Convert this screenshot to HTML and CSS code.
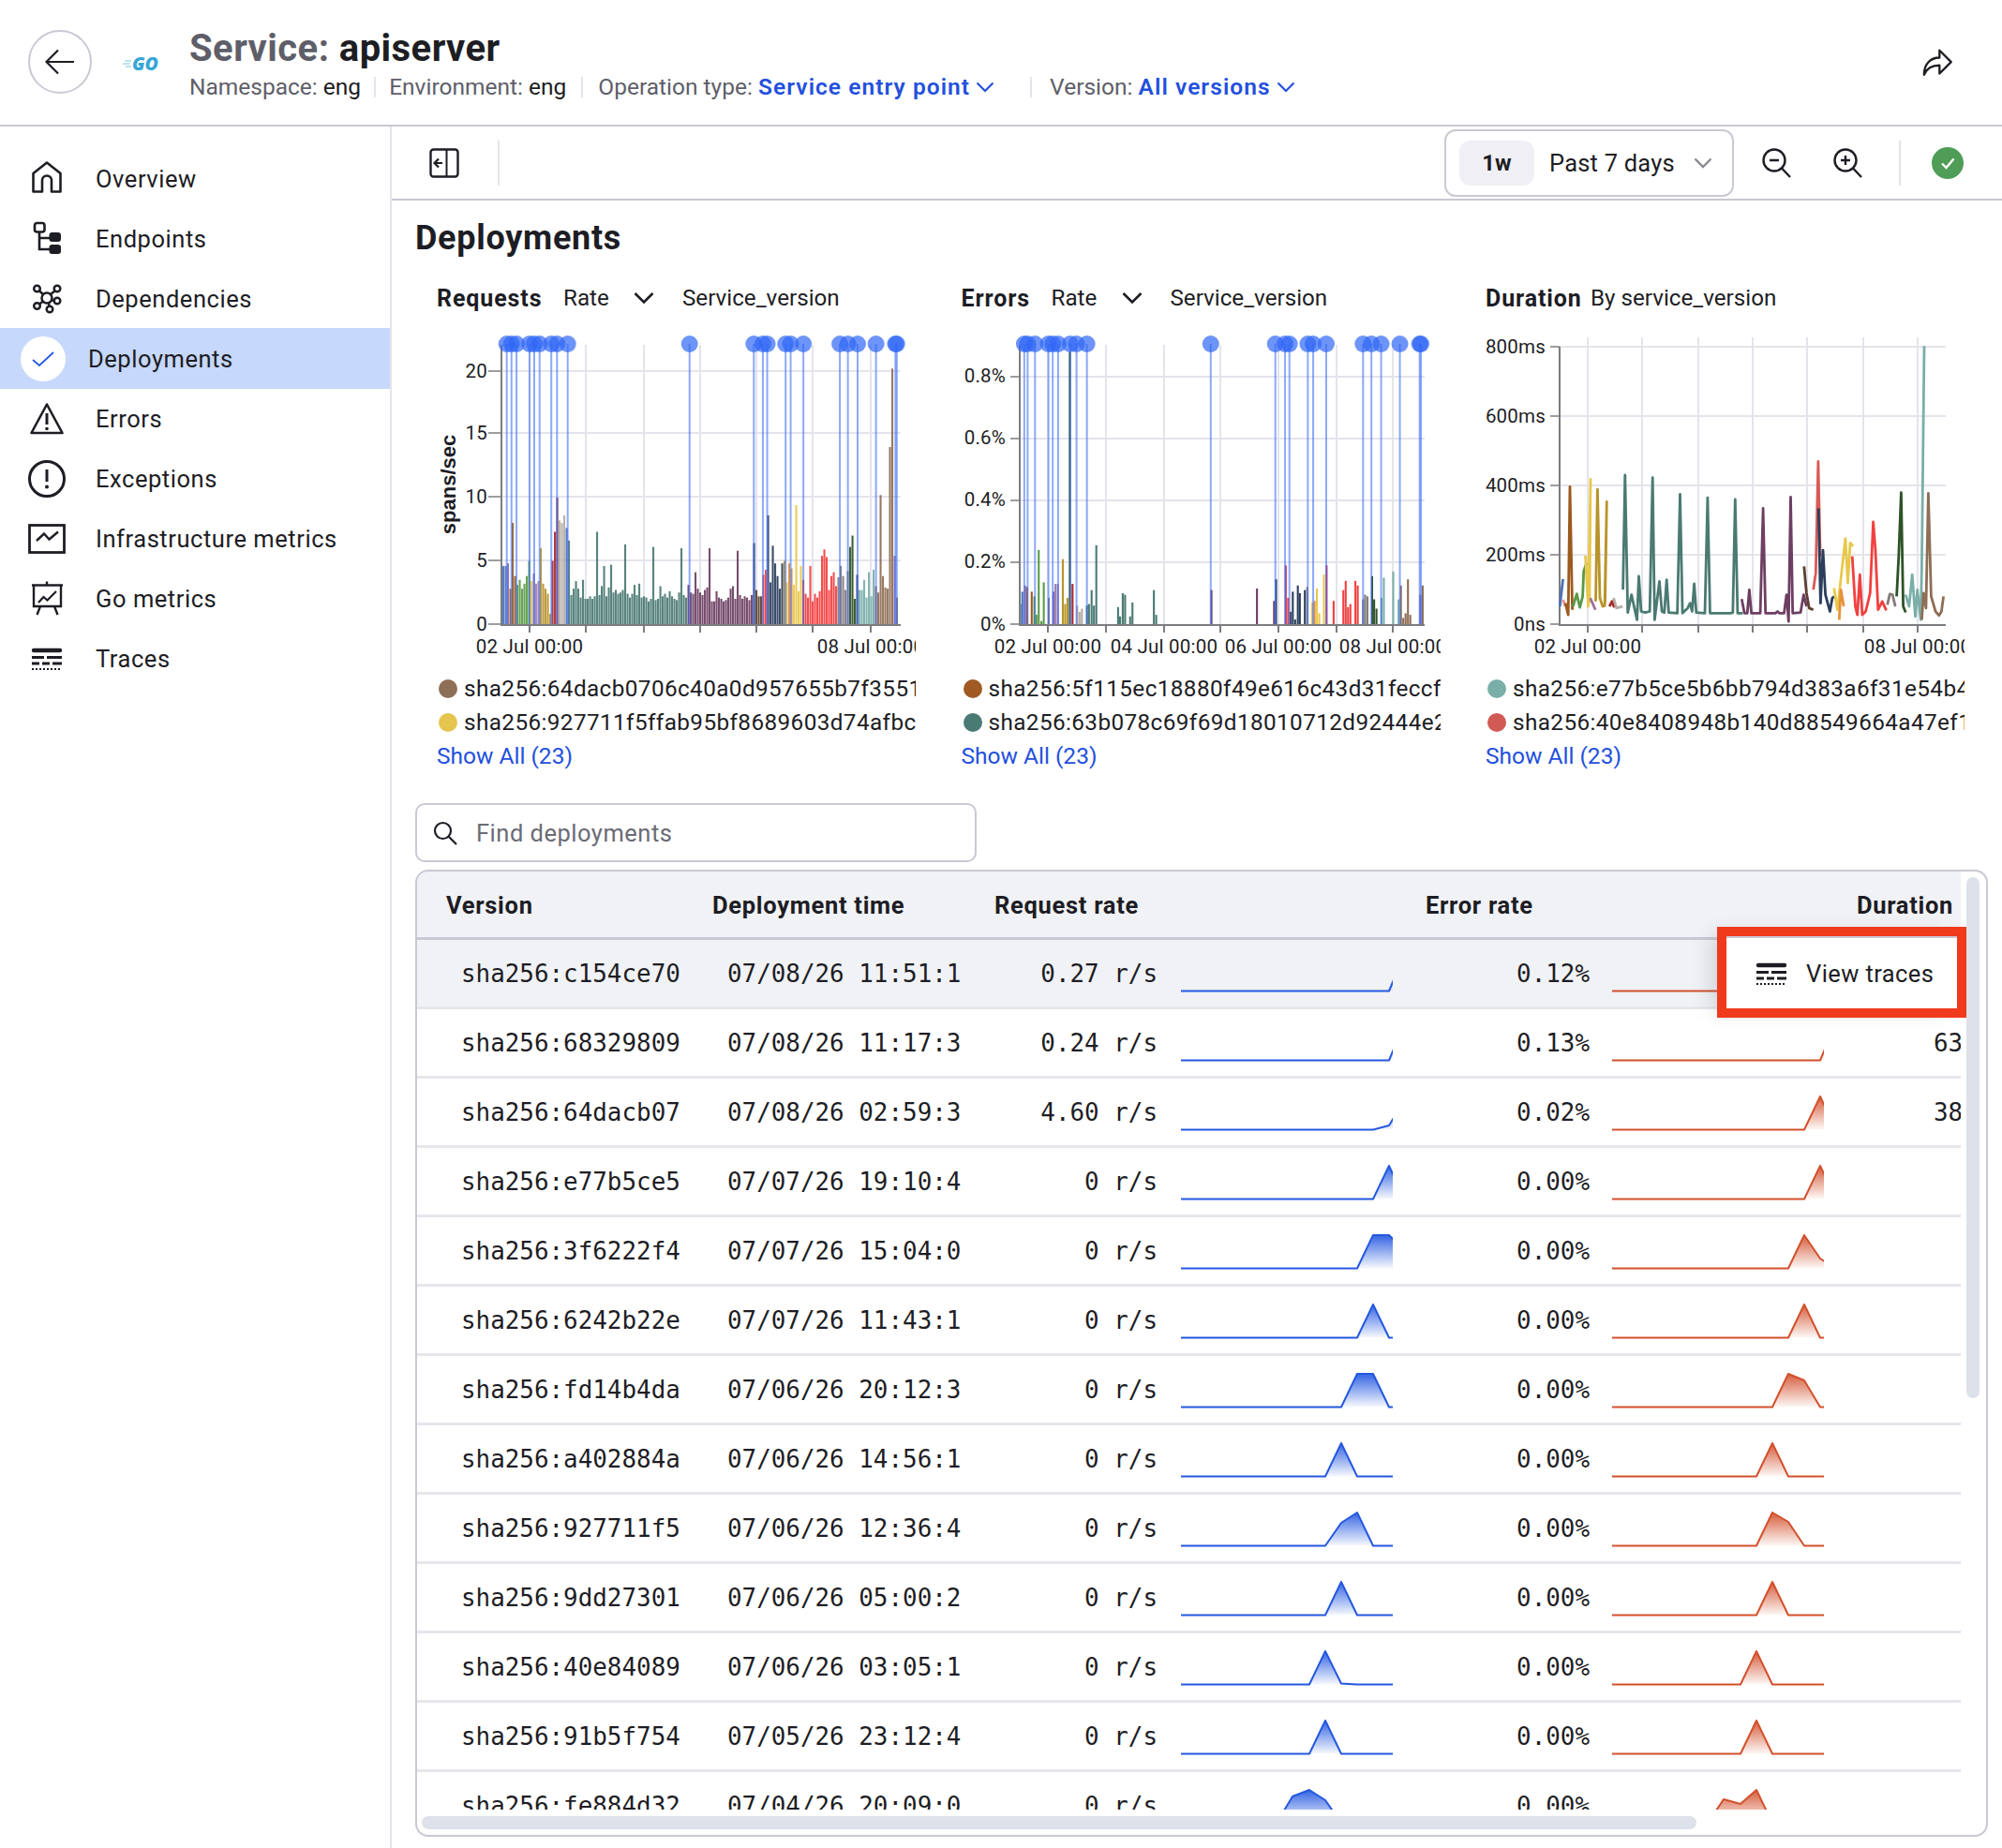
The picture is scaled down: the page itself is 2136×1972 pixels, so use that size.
FILE: index.html
```html
<!DOCTYPE html>
<html lang="en">
<head>
<meta charset="utf-8">
<title>Service: apiserver</title>
<link rel="stylesheet" href="styles.css">
</head>
<body>
<svg class="defs" aria-hidden="true">
  <defs>
    <linearGradient id="gb" gradientUnits="userSpaceOnUse" x1="0" y1="0" x2="0" y2="40"><stop offset="0" stop-color="#2458e0"/><stop offset="1" stop-color="#2458e0" stop-opacity="0"/></linearGradient>
    <linearGradient id="gr" gradientUnits="userSpaceOnUse" x1="0" y1="0" x2="0" y2="40"><stop offset="0" stop-color="#d2502c"/><stop offset="1" stop-color="#d2502c" stop-opacity="0"/></linearGradient>
    <symbol id="traces" viewBox="0 0 40 40">
      <path d="M6 11H34" stroke="currentColor" stroke-width="4.4" stroke-linecap="round" fill="none"/>
      <path d="M4 18.5H17M20 18.5H36M4 25H12M15 25H23M26 25H36" stroke="currentColor" stroke-width="3" fill="none"/>
      <path d="M4 31H36" stroke="currentColor" stroke-width="2" stroke-dasharray="2 2" fill="none"/>
    </symbol>
  </defs>
</svg>

<header class="top">
  <button class="back" type="button" aria-label="Back">
    <svg viewBox="0 0 32 28" width="32" height="28"><path d="M31 14H2M14 1.5 1.5 14 14 26.5" fill="none" stroke="#1d1d24" stroke-width="2.2"/></svg>
  </button>
  <svg class="go" viewBox="0 0 40 16" width="40" height="16" aria-label="Go">
    <path d="M3 5H10M1 8H9M4 11H10" stroke="#7cc4e4" stroke-width="1"/>
    <text x="11" y="14.5" class="gotext" textLength="28" lengthAdjust="spacingAndGlyphs">GO</text>
  </svg>
  <div class="titles">
    <h1 class="title"><span class="title-key">Service:</span> apiserver</h1>
    <div class="meta">
      <span class="meta-item">Namespace: <b>eng</b></span>
      <span class="meta-item">Environment: <b>eng</b></span>
      <span class="meta-item">Operation type: <a class="pick">Service entry point<svg class="chev" viewBox="0 0 20 12" width="20" height="12"><path d="M1.5 1.5 10 10l8.500-8.500" fill="none" stroke="currentColor" stroke-width="2.200"/></svg></a></span>
      <span class="meta-item">Version: <a class="pick">All versions<svg class="chev" viewBox="0 0 20 12" width="20" height="12"><path d="M1.500 1.500 10 10l8.500-8.500" fill="none" stroke="currentColor" stroke-width="2.200"/></svg></a></span>
    </div>
  </div>
  <svg class="share" viewBox="0 0 36 32" width="33" height="30" aria-label="Share"><path d="M2 30C2 18 9 10 20 10V1.500L33.500 15 20 28.500V19C12 19 5 22 2 30Z" fill="none" stroke="#1d1d24" stroke-width="2.500" stroke-linejoin="round"/></svg>
</header>

<div class="shell">
  <nav class="side">
    <a class="nav"><svg class="ico" viewBox="0 0 40 40"><path d="M5.500 14 20 2.500 34.500 14V33.500H25V21.500a5 5 0 0 0-10 0V33.500H5.500Z" fill="none" stroke="currentColor" stroke-width="2.600" stroke-linejoin="round"/></svg><span>Overview</span></a>
    <a class="nav"><svg class="ico" viewBox="0 0 40 40"><rect x="7" y="3" width="10.500" height="9.500" rx="2.500" fill="none" stroke="currentColor" stroke-width="2.600"/><path d="M12 12.500V31H23M12 19H23" fill="none" stroke="currentColor" stroke-width="2.600"/><rect x="22.500" y="13" width="12.500" height="10" rx="3" fill="currentColor"/><rect x="22.500" y="26" width="12.500" height="10" rx="3" fill="currentColor"/></svg><span>Endpoints</span></a>
    <a class="nav"><svg class="ico" viewBox="0 0 40 40"><g fill="none" stroke="currentColor" stroke-width="2.500"><circle cx="20" cy="19" r="5.500"/><circle cx="9.500" cy="9" r="3.300"/><circle cx="31" cy="9" r="3.300"/><circle cx="9.500" cy="27.500" r="3.300"/><circle cx="31" cy="22" r="3.300"/><circle cx="23" cy="31" r="3.300"/><path d="M12 11.500 16 15M28.500 11.500 24 15M12 25.500 16 22.500M28 21.500H25.500M22 24.500 22.500 28"/></g></svg><span>Dependencies</span></a>
    <a class="nav nav-on"><span class="pill"><svg viewBox="0 0 24 16" width="24" height="16"><path d="M1 9 8 15 23 1" fill="none" stroke="#2458e0" stroke-width="1.800"/></svg></span><span>Deployments</span></a>
    <a class="nav"><svg class="ico" viewBox="0 0 40 40"><path d="M20 4.500 36.500 35H3.500Z" fill="none" stroke="currentColor" stroke-width="2.600" stroke-linejoin="round"/><path d="M20 14V26" stroke="currentColor" stroke-width="3"/><circle cx="20" cy="30.500" r="1.800" fill="currentColor"/></svg><span>Errors</span></a>
    <a class="nav"><svg class="ico" viewBox="0 0 40 40"><circle cx="20" cy="20" r="18.500" fill="none" stroke="currentColor" stroke-width="3"/><path d="M20 10V23" stroke="currentColor" stroke-width="3"/><circle cx="20" cy="28.500" r="2" fill="currentColor"/></svg><span>Exceptions</span></a>
    <a class="nav"><svg class="ico" viewBox="0 0 40 40"><rect x="1.500" y="5.500" width="37" height="29" fill="none" stroke="currentColor" stroke-width="2.800"/><path d="M9 22 17 14.500 22.500 20.500 32 12.500" fill="none" stroke="currentColor" stroke-width="2.400"/></svg><span>Infrastructure metrics</span></a>
    <a class="nav"><svg class="ico" viewBox="0 0 40 40"><path d="M4 5.500H37M20 1.500V5.500M6 5.500V28H35V5.500M13 28 9.500 37M28 28 31.500 37" fill="none" stroke="currentColor" stroke-width="2.400"/><path d="M11 24 16.500 18 20.500 21.500 30 12" fill="none" stroke="currentColor" stroke-width="2.200"/></svg><span>Go metrics</span></a>
    <a class="nav"><svg class="ico"><use href="#traces"/></svg><span>Traces</span></a>
  </nav>

  <main class="main">
    <div class="bar">
      <svg class="collapse" viewBox="0 0 32 32" width="32" height="32"><rect x="1.500" y="1.500" width="29" height="29" rx="3" fill="none" stroke="#1d1d24" stroke-width="2.400"/><path d="M18.500 1.500V30.500" stroke="#1d1d24" stroke-width="2"/><path d="M14 16H6M10 11.500 5.500 16 10 20.500" fill="none" stroke="#1d1d24" stroke-width="2.200"/></svg>
      <span class="vsep vsep-a"></span>
      <div class="range">
        <span class="chip">1w</span>
        <span class="range-label">Past 7 days</span>
        <svg class="range-chev" viewBox="0 0 20 12" width="20" height="12"><path d="M1.500 1.500 10 10l8.500-8.500" fill="none" stroke="#8a8a90" stroke-width="2.400"/></svg>
      </div>
      <svg class="tool tool-a" viewBox="0 0 32 32" width="32" height="32"><circle cx="13" cy="13" r="11.500" fill="none" stroke="#1d1d24" stroke-width="2.400"/><path d="M21 21.500 30 31M8 13H18" fill="none" stroke="#1d1d24" stroke-width="2.400"/></svg>
      <svg class="tool tool-b" viewBox="0 0 32 32" width="32" height="32"><circle cx="13" cy="13" r="11.500" fill="none" stroke="#1d1d24" stroke-width="2.400"/><path d="M21 21.500 30 31M8 13H18M13 8V18" fill="none" stroke="#1d1d24" stroke-width="2.400"/></svg>
      <span class="vsep vsep-b"></span>
      <svg class="ok" viewBox="0 0 34 34" width="34" height="34"><circle cx="17" cy="17" r="17" fill="#4f9d57"/><path d="M11 17.500 15.500 22 23.500 12.500" fill="none" stroke="#fff" stroke-width="2.400"/></svg>
    </div>

    <section class="page">
      <h2 class="heading">Deployments</h2>
      <div class="charts">
        <article class="panel">
          <div class="panel-head"><b class="pt pt-a">Requests</b><span class="pm">Rate</span><svg class="pchev" viewBox="0 0 22 14" width="22" height="14"><path d="M1.500 2 11 11.500 20.500 2" fill="none" stroke="#1d1d24" stroke-width="2.600"/></svg><span>Service_version</span></div>
          <svg class="plot" id="req" viewBox="466 345 511 360">
            <g class="tx ty"><text x="520" y="403">20</text><text x="520" y="469">15</text><text x="520" y="537">10</text><text x="520" y="605">5</text><text x="520" y="673">0</text></g>
            <g class="tx tm"><text x="565" y="697">02 Jul 00:00</text><text x="929" y="697">08 Jul 00:00</text></g>
            <text class="unit" transform="translate(486 517) rotate(-90)">spans/sec</text>
          </svg>
          <div class="legend"><i class="dot d1"></i>sha256:64dacb0706c40a0d957655b7f3551a</div>
          <div class="legend"><i class="dot d2"></i>sha256:927711f5ffab95bf8689603d74afbc2</div>
          <a class="more">Show All (23)</a>
        </article>
        <article class="panel">
          <div class="panel-head"><b class="pt pt-b">Errors</b><span class="pm">Rate</span><svg class="pchev" viewBox="0 0 22 14" width="22" height="14"><path d="M1.500 2 11 11.500 20.500 2" fill="none" stroke="#1d1d24" stroke-width="2.600"/></svg><span>Service_version</span></div>
          <svg class="plot" id="err" viewBox="1026 345 511 360">
            <g class="tx ty"><text x="1073" y="408">0.8%</text><text x="1073" y="474">0.6%</text><text x="1073" y="540">0.4%</text><text x="1073" y="606">0.2%</text><text x="1073" y="673">0%</text></g>
            <g class="tx tm"><text x="1118" y="697">02 Jul 00:00</text><text x="1242" y="697">04 Jul 00:00</text><text x="1364" y="697">06 Jul 00:00</text><text x="1486" y="697">08 Jul 00:00</text></g>
          </svg>
          <div class="legend"><i class="dot d3"></i>sha256:5f115ec18880f49e616c43d31feccf2</div>
          <div class="legend"><i class="dot d4"></i>sha256:63b078c69f69d18010712d92444e21</div>
          <a class="more">Show All (23)</a>
        </article>
        <article class="panel">
          <div class="panel-head"><b class="pt pt-c">Duration</b><span>By service_version</span></div>
          <svg class="plot" id="dur" viewBox="1585 345 511 360">
            <g class="tx ty"><text x="1649" y="377">800ms</text><text x="1649" y="451">600ms</text><text x="1649" y="525">400ms</text><text x="1649" y="599">200ms</text><text x="1649" y="673">0ns</text></g>
            <g class="tx tm"><text x="1694" y="697">02 Jul 00:00</text><text x="2046" y="697">08 Jul 00:00</text></g>
          </svg>
          <div class="legend"><i class="dot d5"></i>sha256:e77b5ce5b6bb794d383a6f31e54b49</div>
          <div class="legend"><i class="dot d6"></i>sha256:40e8408948b140d88549664a47ef1</div>
          <a class="more">Show All (23)</a>
        </article>
      </div>

      <label class="find">
        <svg viewBox="0 0 26 26" width="26" height="26"><circle cx="10.500" cy="10.500" r="8.500" fill="none" stroke="#1d1d24" stroke-width="2.200"/><path d="M16.500 16.500 25 25" stroke="#1d1d24" stroke-width="2.200"/></svg>
        <span>Find deployments</span>
      </label>

      <div class="tablebox">
        <div class="scroller">
          <div class="row head">
            <div class="c1">Version</div><div class="c2">Deployment time</div><div class="c3">Request rate</div><div></div><div class="c5">Error rate</div><div></div><div class="c7">Duration</div>
          </div>
          <div class="row hot"><div class="c1">sha256:c154ce70</div><div class="c2">07/08/26 11:51:1</div><div class="c3">0.27 r/s</div><svg class="spark"><path class="b" fill="url(#gb)" d="M0 38.500H222L228 24V38.500"/></svg><div class="c5">0.12%</div><svg class="spark"><path class="r" fill="url(#gr)" d="M0 38.500H222L228 24V38.500"/></svg><div class="c7"></div></div>
          <div class="row"><div class="c1">sha256:68329809</div><div class="c2">07/08/26 11:17:3</div><div class="c3">0.24 r/s</div><svg class="spark"><path class="b" fill="url(#gb)" d="M0 38.500H222L228 24V38.500"/></svg><div class="c5">0.13%</div><svg class="spark"><path class="r" fill="url(#gr)" d="M0 38.500H222L228 24V38.500"/></svg><div class="c7">63</div></div>
          <div class="row"><div class="c1">sha256:64dacb07</div><div class="c2">07/08/26 02:59:3</div><div class="c3">4.60 r/s</div><svg class="spark"><path class="b" fill="url(#gb)" d="M0 38.500H205L222 34L228 24V38.500"/></svg><div class="c5">0.02%</div><svg class="spark"><path class="r" fill="url(#gr)" d="M0 38.500H205L222 3L228 16V38.500"/></svg><div class="c7">38</div></div>
          <div class="row"><div class="c1">sha256:e77b5ce5</div><div class="c2">07/07/26 19:10:4</div><div class="c3">0 r/s</div><svg class="spark"><path class="b" fill="url(#gb)" d="M0 38.500H205L222 3L228 16V38.500"/></svg><div class="c5">0.00%</div><svg class="spark"><path class="r" fill="url(#gr)" d="M0 38.500H205L222 3L228 16V38.500"/></svg><div class="c7"></div></div>
          <div class="row"><div class="c1">sha256:3f6222f4</div><div class="c2">07/07/26 15:04:0</div><div class="c3">0 r/s</div><svg class="spark"><path class="b" fill="url(#gb)" d="M0 38.500H188L205 3H222L228 9V38.500"/></svg><div class="c5">0.00%</div><svg class="spark"><path class="r" fill="url(#gr)" d="M0 38.500H188L205 3L222 28L228 32V38.500"/></svg><div class="c7"></div></div>
          <div class="row"><div class="c1">sha256:6242b22e</div><div class="c2">07/07/26 11:43:1</div><div class="c3">0 r/s</div><svg class="spark"><path class="b" fill="url(#gb)" d="M0 38.500H188L205 3L222 38.500H226"/></svg><div class="c5">0.00%</div><svg class="spark"><path class="r" fill="url(#gr)" d="M0 38.500H188L205 3L222 38.500H226"/></svg><div class="c7"></div></div>
          <div class="row"><div class="c1">sha256:fd14b4da</div><div class="c2">07/06/26 20:12:3</div><div class="c3">0 r/s</div><svg class="spark"><path class="b" fill="url(#gb)" d="M0 38.500H171L188 3H205L222 38.500H226"/></svg><div class="c5">0.00%</div><svg class="spark"><path class="r" fill="url(#gr)" d="M0 38.500H171L188 3L205 10L222 38.500H226"/></svg><div class="c7"></div></div>
          <div class="row"><div class="c1">sha256:a402884a</div><div class="c2">07/06/26 14:56:1</div><div class="c3">0 r/s</div><svg class="spark"><path class="b" fill="url(#gb)" d="M0 38.500H154L171 3L188 38.500H226"/></svg><div class="c5">0.00%</div><svg class="spark"><path class="r" fill="url(#gr)" d="M0 38.500H154L171 3L188 38.500H226"/></svg><div class="c7"></div></div>
          <div class="row"><div class="c1">sha256:927711f5</div><div class="c2">07/06/26 12:36:4</div><div class="c3">0 r/s</div><svg class="spark"><path class="b" fill="url(#gb)" d="M0 38.500H154L171 14L188 3L205 38.500H226"/></svg><div class="c5">0.00%</div><svg class="spark"><path class="r" fill="url(#gr)" d="M0 38.500H154L171 3L188 13L205 38.500H226"/></svg><div class="c7"></div></div>
          <div class="row"><div class="c1">sha256:9dd27301</div><div class="c2">07/06/26 05:00:2</div><div class="c3">0 r/s</div><svg class="spark"><path class="b" fill="url(#gb)" d="M0 38.500H154L171 3L188 38.500H226"/></svg><div class="c5">0.00%</div><svg class="spark"><path class="r" fill="url(#gr)" d="M0 38.500H154L171 3L188 38.500H226"/></svg><div class="c7"></div></div>
          <div class="row"><div class="c1">sha256:40e84089</div><div class="c2">07/06/26 03:05:1</div><div class="c3">0 r/s</div><svg class="spark"><path class="b" fill="url(#gb)" d="M0 38.500H137L154 3L171 37.500L188 38.500H226"/></svg><div class="c5">0.00%</div><svg class="spark"><path class="r" fill="url(#gr)" d="M0 38.500H137L154 3L171 38.500H226"/></svg><div class="c7"></div></div>
          <div class="row"><div class="c1">sha256:91b5f754</div><div class="c2">07/05/26 23:12:4</div><div class="c3">0 r/s</div><svg class="spark"><path class="b" fill="url(#gb)" d="M0 38.500H137L154 3L171 38.500H226"/></svg><div class="c5">0.00%</div><svg class="spark"><path class="r" fill="url(#gr)" d="M0 38.500H137L154 3L171 38.500H226"/></svg><div class="c7"></div></div>
          <div class="row"><div class="c1">sha256:fe884d32</div><div class="c2">07/04/26 20:09:0</div><div class="c3">0 r/s</div><svg class="spark"><path class="b" fill="url(#gb)" d="M102 38.500L119 10L137 3L154 14L171 38.500"/></svg><div class="c5">0.00%</div><svg class="spark"><path class="r" fill="url(#gr)" d="M102 38.500L119 13L137 18L154 3L171 38.500"/></svg><div class="c7"></div></div>
        </div>
        <div class="callout"><svg class="callout-ico"><use href="#traces"/></svg><span>View traces</span></div>
        <span class="thumb-v"></span>
        <span class="thumb-h"></span>
      </div>
    </section>
  </main>
</div>
<script src="charts.js"></script>
</body>
</html>
```

FILE: styles.css
```css
* { box-sizing: border-box; }
html, body { margin: 0; padding: 0; }
body {
  width: 2136px; height: 1972px; overflow: hidden; background: #fff; color: #1d1d24;
  font-family: Roboto, "Liberation Sans", sans-serif; font-size: 25px;
}
.defs { position: absolute; width: 0; height: 0; }
.top { height: 135px; border-bottom: 2px solid #c9c9d4; display: flex; align-items: flex-start; padding: 32px 52px 0 30px; }
.back { width: 68px; height: 68px; border-radius: 50%; border: 2px solid #c9c9d4; background: #fff; padding: 0; display: flex; align-items: center; justify-content: center; flex: none; }
.go { margin: 28px 0 0 32px; flex: none; overflow: visible; }
.gotext { font: italic 800 20px "Open Sans", sans-serif; fill: #37a6d8; }
.titles { margin-left: 32px; }
.title { margin: -5px 0 0; font-size: 40px; letter-spacing: .45px; line-height: 50px; font-weight: 700; color: #1d1d24; white-space: nowrap; }
.title-key { color: #5e5e69; }
.meta { display: flex; height: 24px; margin-top: 4px; align-items: center; color: #5e5e69; white-space: nowrap; font-size: 24.500px; }
.meta-item { padding-right: 16px; margin-right: 16px; border-right: 2px solid #e4e4ea; line-height: 22px; }
.meta-item:first-child { padding-right: 14px; margin-right: 14px; }
.meta-item:last-child { border: 0; }
.meta-item:nth-child(3) { padding-right: 38px; margin-right: 19px; }
.meta b { font-weight: 400; color: #1d1d24; }
.pick { color: #2350dd; font-weight: 600; letter-spacing: 1.050px; }
.chev { margin-left: 6px; vertical-align: 2px; }
.share { margin: 20px 0 0 auto; flex: none; }

.shell { display: flex; height: 1837px; }
.side { width: 418px; flex: none; border-right: 2px solid #e4e4ea; padding-top: 24px; }
.nav { display: flex; height: 64px; align-items: center; gap: 32px; padding-left: 30px; font-size: 25.500px; letter-spacing: .55px; white-space: nowrap; }
.ico { width: 40px; height: 40px; flex: none; color: #1d1d24; }
.nav-on { background: #c6d8fb; width: 416px; height: 65px; gap: 24px; padding: 1px 0 0 22px; margin-top: -1px; }
.pill { width: 48px; height: 48px; border-radius: 50%; background: #fff; display: flex; align-items: center; justify-content: center; flex: none; }

.main { flex: 1; min-width: 0; }
.bar { height: 79px; border-bottom: 2px solid #c9c9d4; display: flex; align-items: center; padding: 0 41px 0 40px; }
.collapse { flex: none; }
.vsep { width: 2px; height: 48px; background: #e4e4ea; flex: none; }
.vsep-a { margin-left: 41px; margin-right: auto; }
.range { width: 309px; height: 72px; border: 2px solid #c9c9d4; border-radius: 12px; display: flex; align-items: center; padding-left: 14px; flex: none; }
.chip { width: 80px; height: 48px; border-radius: 12px; background: #f0f0f4; display: flex; align-items: center; justify-content: center; font-weight: 700; font-size: 24px; }
.range-label { margin-left: 16px; white-space: nowrap; font-size: 25.500px; letter-spacing: .2px; }
.range-chev { margin-left: 20px; }
.tool-a { margin-left: 30px; }
.tool-b { margin-left: 44px; }
.vsep-b { margin-left: 38px; }
.ok { margin-left: 33px; }

.page { padding-left: 25px; }
.heading { margin: 16px 0 0; font-size: 36px; letter-spacing: .7px; line-height: 48px; font-weight: 700; }
.charts { display: grid; grid-template-columns: 511px 511px 511px; column-gap: 48.500px; margin: 19px 0 0 23px; }
.panel { width: 511px; overflow: hidden; }
.panel-head { height: 40px; padding-top: 2px; display: flex; align-items: center; white-space: nowrap; font-size: 24.200px; }
.pt { font-weight: 700; font-size: 25px; letter-spacing: .9px; }
.pt-a { width: 135px; }
.pt-b { width: 96px; }
.pt-c { width: 112px; }
.pm { width: 75px; }
.pchev { margin-right: 30px; }
.plot { display: block; width: 511px; height: 360px; margin-top: 8px; overflow: hidden; }
.tx text { font-size: 20.500px; letter-spacing: .2px; fill: #1d1d24; font-family: Roboto, sans-serif; }
.ty text { text-anchor: end; }
.tm text { text-anchor: middle; }
.unit { font: 700 22px "Liberation Sans", sans-serif; fill: #1d1d24; text-anchor: middle; }
.legend { height: 36px; line-height: 36px; white-space: nowrap; overflow: hidden; display: flex; align-items: center; font-size: 24.300px; letter-spacing: .4px; }
.plot + .legend { margin-top: 12px; }
.dot { width: 20px; height: 20px; border-radius: 50%; margin: 0 7px 0 2px; flex: none; }
.d1 { background: #8d6f57; }
.d2 { background: #e6c54e; }
.d3 { background: #a05a22; }
.d4 { background: #4a7a74; }
.d5 { background: #7aafa9; }
.d6 { background: #d25a55; }
.more { display: block; height: 36px; line-height: 36px; color: #2350dd; font-size: 24.500px; }

.find { display: flex; align-items: center; width: 599px; height: 63px; margin-top: 32px; border: 2px solid #c9c9d4; border-radius: 10px; padding-left: 17px; gap: 20px; color: #6b6b76; font-size: 25.500px; letter-spacing: .5px; }
.tablebox { position: relative; width: 1678px; height: 1032px; margin-top: 8px; border: 2px solid #c9c9d4; border-radius: 14px; overflow: hidden; }
.scroller { width: 1647px; height: 1001px; overflow: hidden; }
.row { display: grid; grid-template-columns: 298px 303px 201px 259px 202px 250px 134px; height: 74px; border-bottom: 3px solid #e6e6ec; align-items: center; font-family: "DejaVu Sans Mono", monospace; font-size: 25.900px; white-space: nowrap; }
.row > div { overflow: hidden; }
.c1 { padding-left: 47px; }
.c2 { padding-left: 33px; width: 283px; }
.c3, .c5 { text-align: right; padding-right: 12px; }
.c7 { padding-left: 105px; }
.spark { width: 226px; height: 40px; overflow: hidden; margin-left: 13px; }
.spark path { stroke-width: 2; stroke-linejoin: round; }
.c5 + .spark { margin-left: 12px; }
.b { stroke: #2458e0; }
.r { stroke: #d2502c; }
.hot { background: #f1f2f6; }
.head { height: 73px; padding-top: 2px; background: #f1f2f6; border-bottom: 3px solid #c9c9d4; font-family: Roboto, sans-serif; font-size: 25.500px; letter-spacing: .7px; font-weight: 700; }
.head .c1 { padding-left: 31px; }
.head .c2 { padding-left: 17px; width: auto; }
.head .c3, .head .c5 { text-align: left; padding: 0 0 0 15px; overflow: visible; }
.head .c7 { text-align: right; padding: 0 8px 0 0; }
.callout { position: absolute; left: 1387px; top: 59px; width: 266px; height: 97px; border: 10px solid #f03a1c; background: #fff; box-shadow: -14px 0 20px -8px rgba(60,60,80,.18), inset 0 2px 0 #c9c9d4; display: flex; align-items: center; padding: 2px 0 0 28px; gap: 17px; font-size: 25.500px; letter-spacing: .4px; }
.callout-ico { width: 40px; height: 40px; flex: none; }
.thumb-v { position: absolute; left: 1653px; top: 6px; width: 14px; height: 556px; border-radius: 7px; background: #dde1e9; }
.thumb-h { position: absolute; left: 5px; top: 1008px; width: 1360px; height: 14px; border-radius: 7px; background: #dde1e9; }
```

FILE: charts.js
```js
(function () {
  var NS = 'http://www.w3.org/2000/svg';
  var GRID = '#e4e4ec', AXIS = '#7c7c80';

  function el(parent, name, attrs, first) {
    var n = document.createElementNS(NS, name);
    for (var k in attrs) n.setAttribute(k, attrs[k]);
    if (first) parent.insertBefore(n, parent.firstChild); else parent.appendChild(n);
    return n;
  }

  function frame(layer, cfg) {
    cfg.ys.forEach(function (y) {
      el(layer, 'path', { d: 'M' + cfg.tickL + ' ' + y + 'H' + cfg.axis, stroke: AXIS, 'stroke-width': 1.5 });
      if (y !== cfg.base) el(layer, 'path', { d: 'M' + cfg.axis + ' ' + y + 'H' + cfg.right, stroke: GRID, 'stroke-width': 2 });
    });
    cfg.xs.forEach(function (x) {
      el(layer, 'path', { d: 'M' + x + ' ' + cfg.top + 'V' + cfg.base, stroke: GRID, 'stroke-width': 2 });
      el(layer, 'path', { d: 'M' + x + ' ' + cfg.base + 'V' + (cfg.base + 9), stroke: AXIS, 'stroke-width': 2 });
    });
  }

  function axes(layer, cfg) {
    el(layer, 'path', { d: 'M' + cfg.axis + ' ' + (cfg.axisTop || cfg.top) + 'V' + (cfg.base + 1) + 'H' + cfg.right, stroke: AXIS, 'stroke-width': 2, fill: 'none' });
  }

  function markers(layer, xs, base) {
    xs.forEach(function (x) {
      el(layer, 'path', { d: 'M' + x + ' 367V' + base, stroke: '#3f6ff5', 'stroke-opacity': 0.6, 'stroke-width': 2 });
    });
    xs.forEach(function (x) {
      el(layer, 'circle', { cx: x, cy: 367, r: 9, fill: '#2f66f5', 'fill-opacity': 0.7 });
    });
  }

  var C = {
    teal: '#4a7a72', purple: '#6d3f62', navy: '#2c3e5c', red: '#f24040', yellow: '#e8c84c', orange: '#e8913a',
    brown: '#8e6e55', lteal: '#7aaea8', green: '#5a9a47', dgreen: '#2e5228', gold: '#b8942a', rust: '#9c5a1f',
    beige: '#b5aca4', gray: '#857a78', dbrown: '#5a4030', blue: '#4c72b8', lilac: '#8a6ab0', mauve: '#a080a8',
    dred: '#a8282c', maroon: '#8a3040', crim: '#d03a5a'
  };

  /* ---------- Requests ---------- */
  var reqSvg = document.getElementById('req');
  var reqG = el(reqSvg, 'g', {}, true);
  var req = { axis: 535, right: 961, base: 666, top: 368, tickL: 521, ys: [396, 462, 530, 598, 666], xs: [565, 625, 687, 747, 807, 867, 929] };
  frame(reqG, req);
  var series = [
    ['blue', [4.6, 4.6]], ['lilac', [4.8]], ['rust', [2.8, 8, 3.8]], ['green', [3.1, 3.5, 2.8, 3.2, 3.8, 5]],
    ['yellow', [3.4]], ['lilac', [4]], ['mauve', [3.2, 3.4]], ['gold', [6, 3.2, 2.8, 2.4, 0.8]], ['dred', [5, 7.3]], ['maroon', [10]],
    ['beige', [8.2, 8, 8.6]], ['blue', [7.6]],
    ['teal', [6.6, 2.3, 2.8, 3.4, 2.8, 2.1, 3.5, 2, 2, 2.2, 2, 2.2, 7.3, 2.3, 3, 4.6, 2.2, 2.9, 4.7, 2.5, 2.7, 2.4, 2.5, 2.7, 6.3, 2.4, 2.1, 2.4, 3.1, 2.3, 3.2, 2.1, 2.2, 2.1, 1.8, 2, 6.1, 1.9, 2, 3, 2.2, 2.4, 2.1, 2.6, 2.2, 2, 1.9, 2.5, 6, 2.3, 2.1]],
    ['purple', [3.1, 2.5, 2.4, 4.1, 2.8, 2.5, 2.3, 2.7, 2.9, 6, 1.8, 1.8, 2.6, 2.1, 2, 1.8, 1.9, 2.1, 2.8, 3, 2, 5.8, 2.3, 2, 2.2, 2.1, 1.9, 2.3]],
    ['navy', [6.4]], ['dbrown', [2.7, 2.2, 2.2]], ['red', [3.9, 4.3]], ['navy', [8.6, 3.3, 6.2, 4.8, 3.8, 2.8, 4.8]],
    ['gold', [5]], ['yellow', [3.3]], ['orange', [4.8, 4.4]], ['yellow', [3.1, 9.4, 2.6, 4.6]],
    ['red', [3.5, 2.4, 2.1, 4.6, 1.8, 2.4, 2.1, 2.6, 5.4, 5.9, 5.3, 2.7, 3.8, 4.1, 3]],
    ['gray', [3.7, 4.6, 3.8, 2.7, 4.2]], ['dgreen', [6.1, 7, 2]], ['navy', [3.9]],
    ['lteal', [2.7, 2.7, 3.5, 2.1, 4.1, 2.2, 4.3]], ['brown', [3, 2.5, 10.2, 3.8, 2.9, 2.8, 14, 20.2]], ['lilac', [5.4]], ['brown', [2.1]]
  ];
  var bx = 536;
  series.forEach(function (s) {
    s[1].forEach(function (v) {
      el(reqG, 'rect', { x: bx, y: 666 - v * 13.5, width: 2.1, height: v * 13.5, fill: C[s[0]], 'fill-opacity': 0.92 });
      bx += 2.5;
    });
  });
  axes(reqG, req);
  var mr = [282, 296, 311, 350, 364, 380, 415, 432, 464, 828, 1020, 1047, 1060, 1115, 1130, 1168, 1277, 1301, 1330, 1385, 1443, 1447];
  markers(reqG, mr.map(function (x) { return 440 + x / 2.8; }), 666);

  /* ---------- Errors ---------- */
  var errSvg = document.getElementById('err');
  var errG = el(errSvg, 'g', {}, true);
  var err = { axis: 1088, right: 1520, base: 666, top: 368, tickL: 1078, ys: [402, 468, 534, 600, 666], xs: [1118, 1180, 1242, 1302, 1364, 1426, 1486] };
  frame(errG, err);
  var eb = [
    [248, .065, 'blue'], [254, .105, 'blue'], [262, .125, 'lilac'], [268, .12, 'rust'], [282, .105, 'rust'], [290, .09, 'green'], [296, .03, 'green'], [303, .24, 'green'], [311, .01, 'green'], [318, .135, 'green'], [333, .085, 'gray'],
    [347, .105, 'lilac'], [353, .13, 'mauve'], [360, .13, 'mauve'], [375, .21, 'gold'], [382, .065, 'gold'], [389, .085, 'gold'], [396, .88, 'dgreen'], [404, .13, 'dred'], [418, .06, 'beige'], [425, .04, 'beige'], [432, .05, 'beige'],
    [447, .06, 'teal'], [453, .065, 'teal'], [461, .11, 'teal'], [468, .06, 'teal'], [475, .255, 'teal'], [540, .055, 'teal'], [546, .025, 'teal'], [554, .1, 'teal'], [561, .095, 'teal'], [576, .025, 'teal'], [583, .07, 'teal'], [647, .11, 'teal'], [654, .03, 'teal'],
    [819, .11, 'purple'], [955, .115, 'purple'], [1006, .075, 'purple'], [1012, .145, 'navy'], [1041, .19, 'crim'], [1048, .085, 'red'], [1055, .04, 'navy'], [1062, .105, 'navy'], [1069, .015, 'navy'], [1077, .125, 'navy'], [1083, .1, 'navy'], [1098, .11, 'navy'], [1105, .12, 'gray'],
    [1120, .07, 'yellow'], [1127, .075, 'orange'], [1134, .115, 'yellow'], [1141, .035, 'yellow'], [1155, .16, 'yellow'], [1163, .19, 'crim'], [1184, .075, 'red'], [1213, .11, 'red'], [1220, .14, 'red'], [1227, .055, 'red'], [1234, .065, 'red'], [1249, .14, 'red'], [1256, .125, 'red'],
    [1272, .08, 'gray'], [1278, .095, 'gray'], [1285, .09, 'gray'], [1299, .155, 'dgreen'], [1305, .08, 'dgreen'], [1312, .05, 'dgreen'], [1327, .085, 'lteal'], [1334, .15, 'lteal'], [1362, .17, 'lteal'], [1378, .08, 'lteal'],
    [1385, .125, 'brown'], [1392, .02, 'brown'], [1399, .035, 'brown'], [1406, .145, 'brown'], [1413, .03, 'brown'], [1443, .095, 'lilac'], [1450, .125, 'brown']
  ];
  eb.forEach(function (b) {
    var h = b[1] * 330;
    el(errG, 'rect', { x: 1000 + b[0] / 2.8 - 1, y: 666 - h, width: 2.1, height: h, fill: C[b[2]] });
  });
  axes(errG, err);
  var me = [260, 270, 292, 332, 345, 361, 397, 416, 447, 817, 1010, 1039, 1052, 1107, 1123, 1162, 1272, 1297, 1326, 1382, 1441, 1445];
  markers(errG, me.map(function (x) { return 1000 + x / 2.8; }), 666);

  /* ---------- Duration ---------- */
  var durSvg = document.getElementById('dur');
  var durG = el(durSvg, 'g', {}, true);
  var dur = { axis: 1664, right: 2076, base: 666, top: 360, axisTop: 370, tickL: 1654, ys: [370, 444, 518, 592, 666], xs: [1694, 1752, 1812, 1870, 1928, 1988, 2046] };
  frame(durG, dur);
  axes(durG, dur);
  var lines = [
    ['blue', '284,1000 293,918'], ['#e89090', '293,980 300,1000'], ['rust', '300,990 308,1025 313,642 320,1010'],
    ['green', '322,1000 333,962 342,1003 350,970 353,895 361,870'], ['yellow', '358,848 366,1000 373,620 370,990'],
    ['#a06ea0', '372,975 387,1010'], ['gold', '388,985 393,650 400,975 408,1000 414,998 420,687 415,990'],
    ['dred', '428,1000 435,985 442,1003'], ['beige', '440,975 448,1005 458,1002 466,1000'],
    ['teal', '467,950 473,607 481,1018 492,965 508,1040 513,910 520,1015 532,1018 545,1015 553,615 559,1040 573,925 580,1015 587,1018 594,920 600,1018 625,1020 633,665 640,1020 655,1005 662,990 668,1015 674,932 680,1018 705,1020 713,675 720,1020 780,1020 786,1018 793,680 800,1020 815,1020'],
    ['purple', '812,978 820,1020 828,1020 834,950 840,1020 866,1020 874,707 881,1020 910,1020 916,1015 922,1020 935,1020 942,965 948,1045 954,673 960,1020 983,1018 992,965 1000,1000'],
    ['dbrown', '993,880 1000,960 1008,1005 1020,1010'], ['#d85a55', '1020,950 1027,900 1034,567 1040,850'],
    ['navy', '1035,707 1041,990 1048,832 1055,965 1068,1015 1075,975 1080,970'],
    ['yellow', '1080,945 1090,1010 1113,797 1120,930 1127,810 1136,820'], ['orange', '1095,1040 1100,950 1108,1000'],
    ['red', '1133,850 1142,1000 1148,1025 1155,905 1162,1025 1172,1015 1185,960 1194,747 1200,830 1208,1010 1220,985 1232,1012'],
    ['gray', '1235,995 1242,963 1250,965 1258,1000'], ['dgreen', '1262,970 1268,850 1275,660 1281,1000 1288,1018'],
    ['lteal', '1288,965 1298,1000 1307,905 1316,1030 1322,950 1332,1040 1335,880 1342,222'],
    ['brown', '1335,1040 1340,960 1347,1005 1354,662 1362,970 1375,1015 1385,1027 1392,1015 1398,970']
  ];
  lines.forEach(function (l) {
    var pts = l[1].split(' ').map(function (p) {
      var a = p.split(',');
      return (1560 + a[0] / 2.722).toFixed(1) + ',' + (290 + a[1] / 2.8).toFixed(1);
    }).join(' ');
    el(durG, 'polyline', { points: pts, fill: 'none', stroke: C[l[0]] || l[0], 'stroke-width': 2.8, 'stroke-linejoin': 'round' });
  });
})();
```
